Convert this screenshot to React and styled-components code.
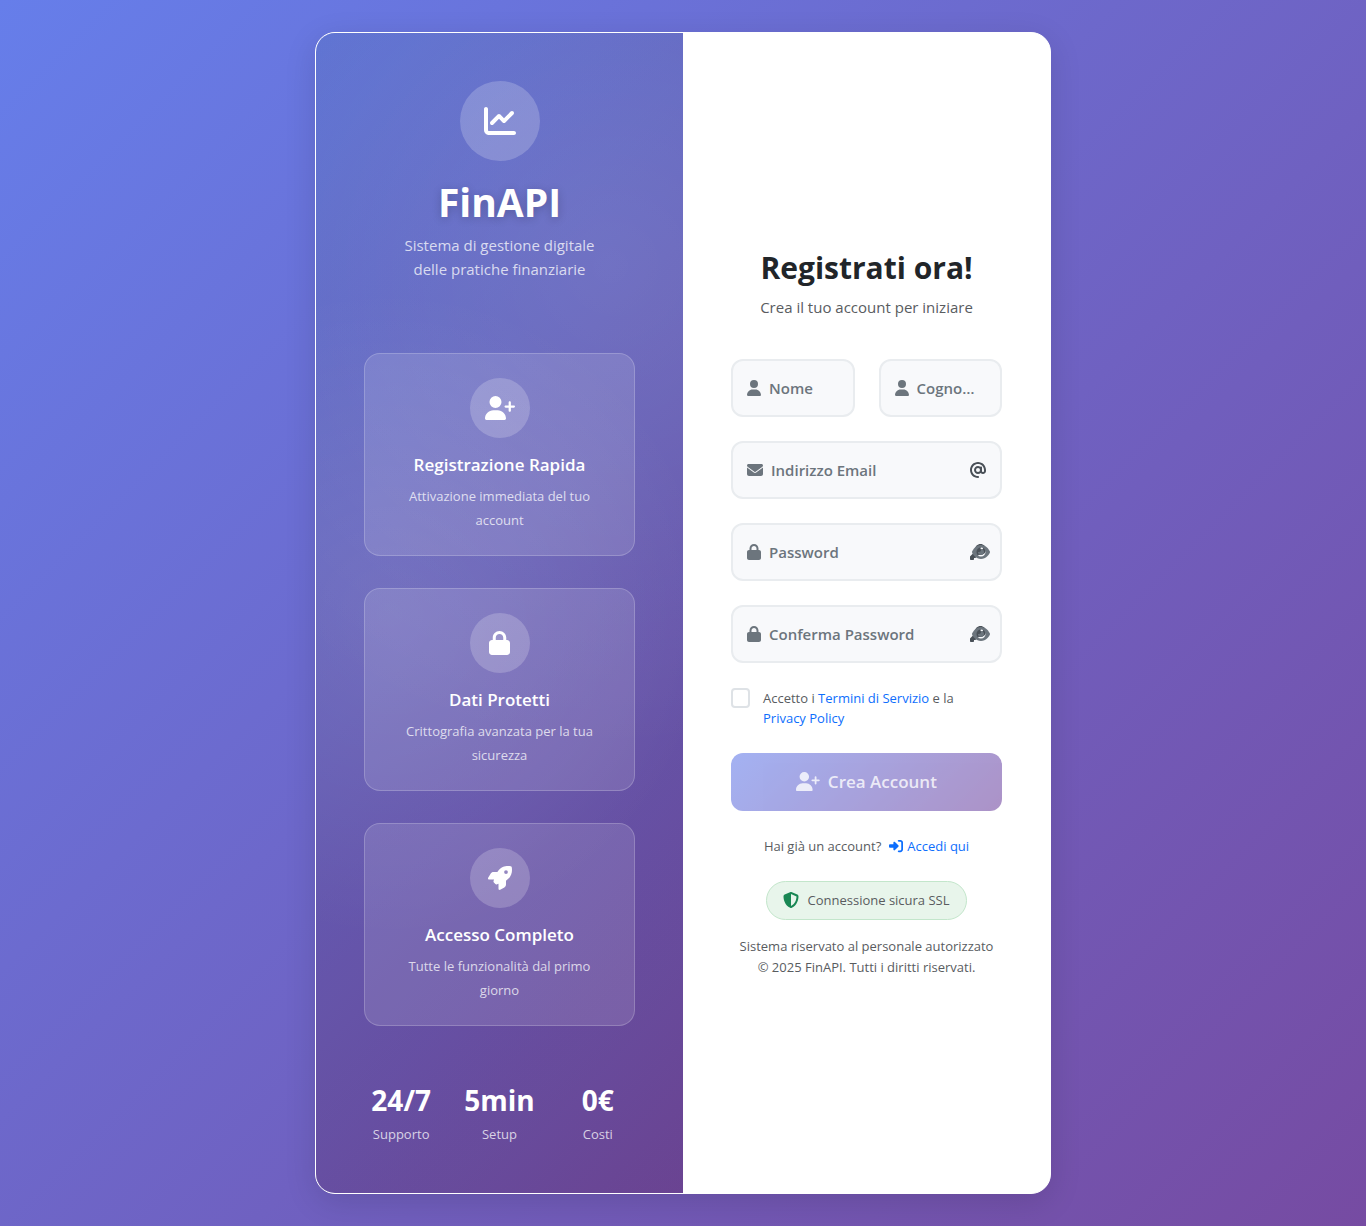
import React, { useState } from 'react';
import styled, { createGlobalStyle } from 'styled-components';
import {
  FaChartLine, FaUserPlus, FaLock, FaRocket, FaUser, FaEnvelope,
  FaAt, FaKey, FaEye, FaRightToBracket, FaShieldHalved,
} from 'react-icons/fa6';

const GlobalStyle = createGlobalStyle`
  *, *::before, *::after { box-sizing: border-box; }
  body {
    margin: 0;
    font-family: 'Open Sans', 'Noto Sans', sans-serif;
    font-size: 15px;
    line-height: 24px;
    color: #212529;
  }
  h1, h2, h3, p { margin: 0; }
  svg { display: block; flex: none; }
  a { color: #0d6efd; text-decoration: none; white-space: nowrap; }
`;

const UserPlusIcon = styled(FaUserPlus)`width: 1.25em;`;
const EyeIcon = styled(FaEye)`width: 1.125em;`;
const UserIcon = styled(FaUser)`width: 0.875em;`;
const LockIcon = styled(FaLock)`width: 0.875em;`;

const Page = styled.div`
  min-height: 100vh;
  padding: 32px;
  display: flex;
  align-items: center;
  justify-content: center;
  background: linear-gradient(135deg, #667eea 0%, #764ba2 100%);
`;

const Card = styled.main`
  width: 100%;
  max-width: 736px;
  display: grid;
  grid-template-columns: 1fr 1fr;
  overflow: hidden;
  border: 1px solid #fff;
  border-radius: 20px;
  background: #fff;
  box-shadow: 0 8px 32px rgba(0, 0, 0, 0.12);
  @media (max-width: 640px) { grid-template-columns: 1fr; }
`;

const Hero = styled.section`
  padding: 48px;
  color: #fff;
  text-align: center;
  background:
    radial-gradient(circle at 20% 50%, rgba(255, 255, 255, 0.1) 0%, transparent 50%),
    radial-gradient(circle at 80% 20%, rgba(255, 255, 255, 0.1) 0%, transparent 50%),
    linear-gradient(rgba(0, 0, 0, 0.1), rgba(0, 0, 0, 0.1)),
    linear-gradient(135deg, #667eea 0%, #764ba2 100%);
`;

const Disc = styled.div`
  display: flex;
  align-items: center;
  justify-content: center;
  width: ${(p) => p.$size}px;
  height: ${(p) => p.$size}px;
  margin: 0 auto 16px;
  border-radius: 50%;
  background: rgba(255, 255, 255, 0.2);
  font-size: ${(p) => p.$icon}px;
`;

const Brand = styled.header`
  margin-bottom: 72px;
`;

const BrandName = styled.h1`
  margin-bottom: 6px;
  font-size: 39px;
  line-height: 50px;
  font-weight: 700;
  text-shadow: 0 2px 10px rgba(0, 0, 0, 0.2);
`;

const Tagline = styled.p`
  max-width: 208px;
  margin: 0 auto;
  color: rgba(255, 255, 255, 0.75);
`;

const Features = styled.div`
  display: grid;
  gap: 32px;
`;

const Feature = styled.article`
  padding: 24px 24px 23px;
  border: 1px solid rgba(255, 255, 255, 0.2);
  border-radius: 16px;
  background: rgba(255, 255, 255, 0.12);
`;

const FeatureTitle = styled.h3`
  margin-bottom: 8px;
  font-size: 17px;
  line-height: 22px;
  font-weight: 600;
`;

const FeatureText = styled.p`
  font-size: 13px;
  color: rgba(255, 255, 255, 0.75);
`;

const Stats = styled.div`
  display: grid;
  grid-template-columns: repeat(3, 1fr);
  gap: 24px;
  margin-top: 55px;
`;

const Stat = styled.div`
  display: flex;
  flex-direction: column;
  align-items: center;
`;

const StatValue = styled.strong`
  margin-bottom: 4px;
  font-size: 28px;
  line-height: 39px;
  font-weight: 700;
`;

const StatLabel = styled.span`
  font-size: 13px;
  line-height: 21px;
  color: rgba(255, 255, 255, 0.75);
`;

const Panel = styled.section`
  padding: 48px;
  display: flex;
  flex-direction: column;
  justify-content: center;
  text-align: center;
  background: #fff;
`;

const Title = styled.h2`
  margin-bottom: 8px;
  font-size: 30px;
  line-height: 38px;
  font-weight: 700;
`;

const Muted = styled.p`
  color: #595c5f;
`;

const Form = styled.form`
  display: grid;
  gap: 24px;
  margin-top: 40px;
  text-align: left;
`;

const FieldPair = styled.div`
  display: grid;
  grid-template-columns: 1fr 1fr;
  gap: 24px;
`;

const FieldBox = styled.div`
  position: relative;
  min-width: 0;
`;

const Input = styled.input`
  display: block;
  width: 100%;
  height: 58px;
  padding: 16px;
  border: 2px solid #e9ecef;
  border-radius: 12px;
  background: #f8f9fb;
  font: inherit;
  color: #212529;
  outline: none;
  &:focus { border-color: #667eea; }
`;

const FieldLabel = styled.label`
  position: absolute;
  inset: 0 20px 0 16px;
  display: flex;
  align-items: center;
  gap: 8px;
  color: #6c757d;
  font-weight: 600;
  pointer-events: none;
  svg { font-size: 16px; }
  ${Input}:not(:placeholder-shown) + & { display: none; }
`;

const LabelText = styled.span`
  overflow: hidden;
  text-overflow: ellipsis;
  white-space: nowrap;
`;

const TrailingIcon = styled.span`
  position: absolute;
  top: 0;
  bottom: 0;
  right: 16px;
  display: flex;
  align-items: center;
  font-size: 16px;
  color: #495057;
`;

const RevealButton = styled.button`
  position: absolute;
  top: 0;
  bottom: 0;
  right: 12px;
  display: flex;
  align-items: center;
  padding: 0;
  border: 0;
  background: none;
  font-size: 16px;
  color: #6c757d;
  cursor: pointer;
`;

const Terms = styled.div`
  display: flex;
  gap: 13px;
  padding: 1px 0;
  font-size: 13px;
  line-height: 20px;
  color: #595c5f;
`;

const Checkbox = styled.input`
  appearance: none;
  flex: none;
  width: 19px;
  height: 20px;
  margin: 0;
  border: 2px solid #dee2e6;
  border-radius: 4px;
  background: #fff;
  &:checked { background: #667eea; border-color: #667eea; }
`;

const Submit = styled.button`
  display: flex;
  align-items: center;
  justify-content: center;
  gap: 8px;
  height: 58px;
  border: 0;
  border-radius: 12px;
  background: linear-gradient(135deg, #667eea 0%, #764ba2 100%);
  color: rgba(255, 255, 255, 0.8);
  font: inherit;
  font-size: 17px;
  font-weight: 600;
  opacity: 0.6;
  svg { font-size: 19px; }
`;

const LoginLine = styled.p`
  display: flex;
  justify-content: center;
  gap: 8px;
  margin-top: 24px;
  font-size: 13px;
  line-height: 22px;
  color: #595c5f;
`;

const IconLink = styled.a`
  display: flex;
  align-items: center;
  gap: 4px;
  svg { font-size: 14px; }
`;

const Secure = styled.div`
  align-self: center;
  display: flex;
  align-items: center;
  gap: 8px;
  margin: 24px 0 16px;
  padding: 8px 16px;
  border: 1px solid #c3e6cb;
  border-radius: 20px;
  background: #e8f5eb;
  font-size: 13px;
  line-height: 21px;
  color: #595c5f;
  svg { font-size: 16px; color: #198754; }
`;

const Legal = styled.footer`
  font-size: 13px;
  line-height: 21px;
  color: #595c5f;
`;

const features = [
  { icon: UserPlusIcon, title: 'Registrazione Rapida', text: 'Attivazione immediata del tuo account' },
  { icon: LockIcon, title: 'Dati Protetti', text: 'Crittografia avanzata per la tua sicurezza' },
  { icon: FaRocket, title: 'Accesso Completo', text: 'Tutte le funzionalità dal primo giorno' },
];

const stats = [
  { value: '24/7', label: 'Supporto' },
  { value: '5min', label: 'Setup' },
  { value: '0€', label: 'Costi' },
];

function Field({ id, icon: Icon, label, type = 'text', trailing: Trailing, reveal }) {
  const [shown, setShown] = useState(false);
  return (
    <FieldBox>
      <Input id={id} type={shown ? 'text' : type} placeholder=" " />
      <FieldLabel htmlFor={id}>
        <Icon />
        <LabelText>{label}</LabelText>
      </FieldLabel>
      {Trailing && <TrailingIcon><Trailing /></TrailingIcon>}
      {reveal && (
        <RevealButton type="button" aria-label="Mostra password" onClick={() => setShown(!shown)}>
          <EyeIcon />
        </RevealButton>
      )}
    </FieldBox>
  );
}

export default function App() {
  return (
    <Page>
      <GlobalStyle />
      <Card>
        <Hero>
          <Brand>
            <Disc $size={80} $icon={32}><FaChartLine /></Disc>
            <BrandName>FinAPI</BrandName>
            <Tagline>Sistema di gestione digitale delle pratiche finanziarie</Tagline>
          </Brand>
          <Features>
            {features.map(({ icon: Icon, title, text }) => (
              <Feature key={title}>
                <Disc $size={60} $icon={24}><Icon /></Disc>
                <FeatureTitle>{title}</FeatureTitle>
                <FeatureText>{text}</FeatureText>
              </Feature>
            ))}
          </Features>
          <Stats>
            {stats.map(({ value, label }) => (
              <Stat key={label}>
                <StatValue>{value}</StatValue>
                <StatLabel>{label}</StatLabel>
              </Stat>
            ))}
          </Stats>
        </Hero>
        <Panel>
          <Title>Registrati ora!</Title>
          <Muted>Crea il tuo account per iniziare</Muted>
          <Form onSubmit={(e) => e.preventDefault()}>
            <FieldPair>
              <Field id="nome" icon={UserIcon} label="Nome" />
              <Field id="cognome" icon={UserIcon} label="Cognome" />
            </FieldPair>
            <Field id="email" type="email" icon={FaEnvelope} label="Indirizzo Email" trailing={FaAt} />
            <Field id="password" type="password" icon={LockIcon} label="Password" trailing={FaKey} reveal />
            <Field id="conferma" type="password" icon={LockIcon} label="Conferma Password" trailing={FaKey} reveal />
            <Terms>
              <Checkbox id="termini" type="checkbox" />
              <label htmlFor="termini">
                Accetto i <a href="#termini-di-servizio">Termini di Servizio</a> e la{' '}
                <a href="#privacy">Privacy Policy</a>
              </label>
            </Terms>
            <Submit type="submit" disabled><UserPlusIcon />Crea Account</Submit>
          </Form>
          <LoginLine>
            Hai già un account?
            <IconLink href="#accedi"><FaRightToBracket />Accedi qui</IconLink>
          </LoginLine>
          <Secure><FaShieldHalved />Connessione sicura SSL</Secure>
          <Legal>
            Sistema riservato al personale autorizzato
            <br />
            © 2025 FinAPI. Tutti i diritti riservati.
          </Legal>
        </Panel>
      </Card>
    </Page>
  );
}
